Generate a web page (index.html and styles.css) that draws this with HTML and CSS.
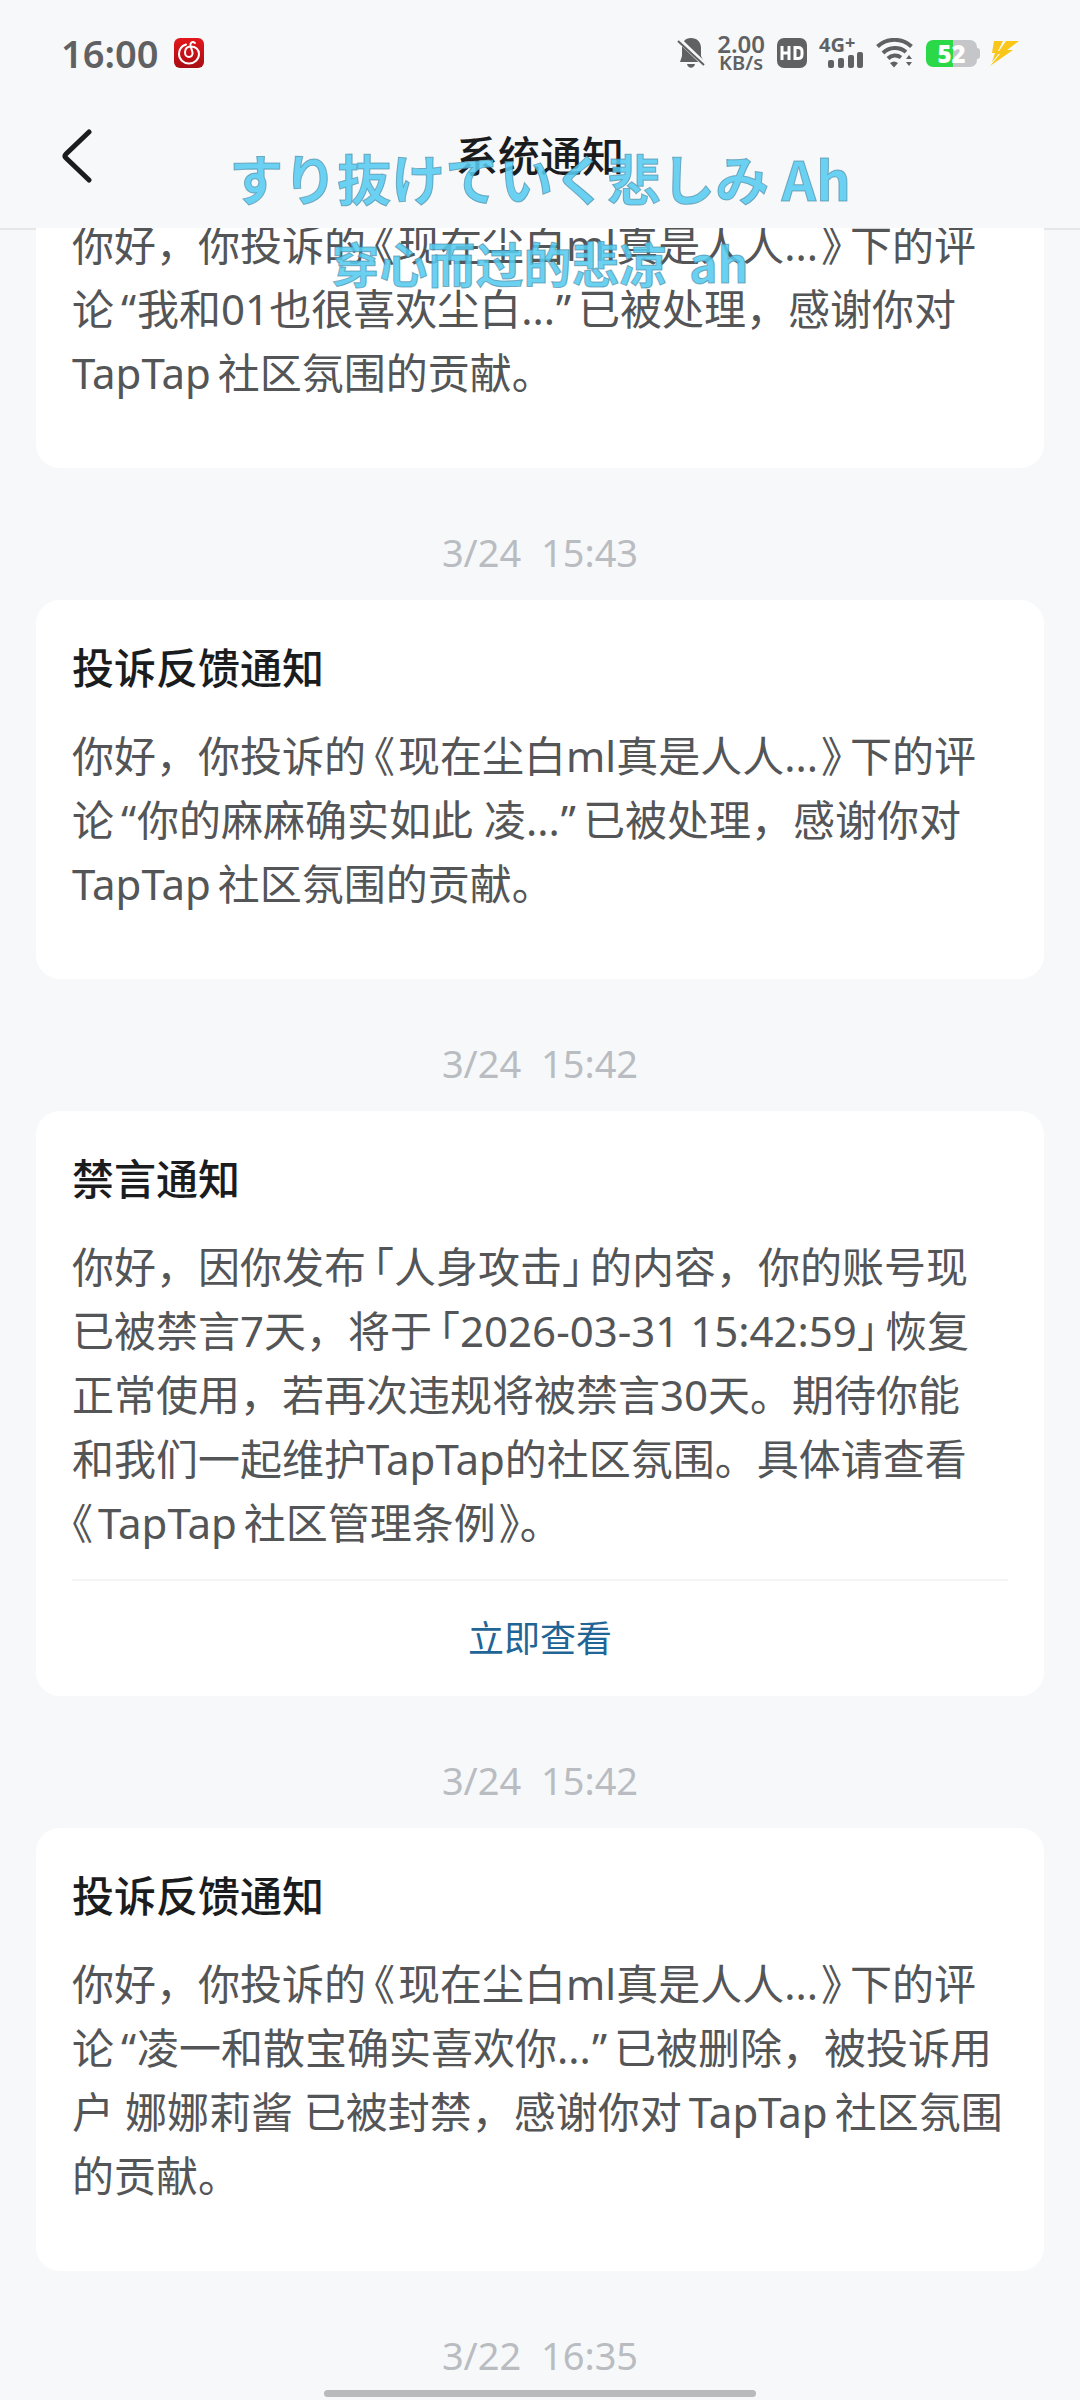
FILE: index.html
```html
<!doctype html>
<html lang="zh-CN">
<head>
	<meta charset="UTF-8" />
	<meta name="viewport" content="width=device-width, initial-scale=1" />
	<title>系统通知</title>
	<link rel="stylesheet" href="styles.css">
</head>
<body>
	<!--状态栏-->
	<div class="status">
		<span class="time">16:00</span>
		<svg class="music" width="30" height="30" viewBox="0 0 30 30">
			<defs>
				<linearGradient id="red" x1="0" y1="0" x2="0" y2="1">
					<stop offset="0" stop-color="#e3181d"/>
					<stop offset="1" stop-color="#a80d14"/>
				</linearGradient>
			</defs>
			<rect width="30" height="30" rx="6" fill="url(#red)"/>
			<path d="M12 6.500C7.500 8 5 11.500 5 16a10 9.500 0 0 0 20 0c0-4.500-3.500-7.500-8-7.500-4 0-6 2.500-6 6 0 3 2 4.500 4 4.500 2.500 0 4-2 3.500-4.500L16.500 7.500C16 4.500 18.500 3 21 5" fill="none" stroke="#fff" stroke-width="2" stroke-linecap="round"/>
		</svg>
		<div class="icons">
			<svg width="28" height="30" viewBox="0 0 28 30">
				<path d="M14 0c6 0 10 4 10 10v8l3 6H3l2-6v-8c0-6 3-10 9-10zM10 26h8c-1 5-7 5-8 0z" fill="#606163"/>
				<path d="M0 0L27 26" stroke="#f7f8fa" stroke-width="5"/>
				<path d="M1 3L27 27" stroke="#606163" stroke-width="2"/>
			</svg>
			<div class="speed"><b>2.00</b><span>KB/s</span></div>
			<svg width="30" height="30" viewBox="0 0 30 30">
				<rect width="30" height="30" rx="7" fill="#606163"/>
				<path d="M5 8v14M12 8v14M5 15h7M18 9.500h3q4 0 4 4v3q0 4-4 4h-3z" fill="none" stroke="#fff" stroke-width="3"/>
			</svg>
			<div class="signal">
				<span>4G<sup>+</sup></span>
				<svg width="36" height="16" viewBox="0 0 36 16" fill="#606163">
					<rect x="0" y="8" width="6" height="8" rx="2"/>
					<rect x="10" y="6" width="6" height="10" rx="2"/>
					<rect x="20" y="3" width="6" height="13" rx="2"/>
					<rect x="29" y="0" width="6" height="16" rx="2"/>
				</svg>
			</div>
			<svg width="38" height="30" viewBox="0 0 38 30">
				<path d="M1.500 8.500a25 25 0 0 1 34 0M7 15a17 17 0 0 1 23-1M12 20.500a10 10 0 0 1 13-1" fill="none" stroke="#606163" stroke-width="4"/>
				<path d="M14 25q4-3 8 0l-4 4.500zM30 21l3-4 3 4zM30 24h6l-3 4z" fill="#606163"/>
			</svg>
			<div class="battery"><span>52</span></div>
			<svg width="30" height="25" viewBox="0 0 30 25" fill="#fbc61a">
				<path d="M5 0h9l-5 10h3L3 21l3-9H3zM17 0h13L18 9h6L1 25l10-12H8z"/>
			</svg>
		</div>
	</div>

	<!--标题栏-->
	<header class="nav">
		<button class="back" aria-label="返回">
			<svg width="32" height="56" viewBox="0 0 32 56">
				<path d="M28 4L5 26q-2 2 0 4l23 22" fill="none" stroke="#1b1c1e" stroke-width="5" stroke-linecap="round"/>
			</svg>
		</button>
		<h1>系统通知</h1>
	</header>

	<!--通知列表-->
	<main class="feed">
		<section class="card cut">
			<p>你好，你投诉的<i class="mark open">《</i>现在尘白ml真是人人...<i class="mark close">》</i>下的评<br>论<i class="quote open">“</i>我和01也很喜欢尘白...<i class="quote close">”</i>已被处理，感谢你对<br>TapTap&#8198;社区氛围的贡献。</p>
		</section>

		<time class="date">3/24  15:43</time>
		<section class="card">
			<h2>投诉反馈通知</h2>
			<p>你好，你投诉的<i class="mark open">《</i>现在尘白ml真是人人...<i class="mark close">》</i>下的评<br>论<i class="quote open">“</i>你的麻麻确实如此 凌...<i class="quote close">”</i>已被处理，感谢你对<br>TapTap&#8198;社区氛围的贡献。</p>
		</section>

		<time class="date">3/24  15:42</time>
		<section class="card has-link">
			<h2>禁言通知</h2>
			<p>你好，因你发布<i class="corner open">「</i>人身攻击<i class="corner close">」</i>的内容，你的账号现<br>已被禁言7天，将于<i class="corner open">「</i>2026-03-31 15:42:59<i class="corner close">」</i>恢复<br>正常使用，若再次违规将被禁言30天。期待你能<br>和我们一起维护TapTap的社区氛围。具体请查看<br><i class="mark first">《</i>TapTap&#8198;社区管理条例<i class="mark last">》</i>。</p>
			<a class="more" href="#">立即查看</a>
		</section>

		<time class="date">3/24  15:42</time>
		<section class="card">
			<h2>投诉反馈通知</h2>
			<p>你好，你投诉的<i class="mark open">《</i>现在尘白ml真是人人...<i class="mark close">》</i>下的评<br>论<i class="quote open">“</i>凌一和散宝确实喜欢你...<i class="quote close">”</i>已被删除，被投诉用<br>户 娜娜莉酱 已被封禁，感谢你对&#8198;TapTap&#8198;社区氛围<br>的贡献。</p>
		</section>

		<time class="date">3/22  16:35</time>
	</main>

	<!--桌面歌词-->
	<div class="lyrics">
		<p lang="ja">すり抜けていく悲しみ Ah</p>
		<p class="sub">穿心而过的悲凉  ah</p>
	</div>
	<div class="home"></div>
</body>
</html>
```
FILE: styles.css
```css
* {
    padding: 0;
    margin: 0;
    box-sizing: border-box;
}

body {
    position: relative;
    display: flex;
    flex-direction: column;
    height: 100vh;
    overflow: hidden;
    background: #f7f8fa;
    color: #545557;
    font-family: "Noto Sans", "Noto Sans CJK SC", sans-serif;
    font-size: 42px;
    line-height: 64px;
}

/* 状态栏 */
.status {
    flex: none;
    display: flex;
    align-items: center;
    height: 84px;
    padding: 22px 61px 0;
    color: #606163;
}

.time {
    font-size: 38px;
    font-weight: 600;
}

.music {
    margin-left: 16px;
}

.icons {
    display: flex;
    align-items: center;
    gap: 12px;
    margin-left: auto;
}

.speed {
    font-size: 20px;
    font-weight: 600;
    line-height: 19px;
    text-align: center;
}

.speed b,
.speed span {
    display: block;
}

.speed b {
    font-size: 24px;
    font-weight: 600;
}

.signal {
    font-size: 20px;
    font-weight: 700;
    line-height: 14px;
}

.signal span,
.signal svg {
    display: block;
}

.signal svg {
    margin-left: 9px;
}

.signal sup {
    font-size: 18px;
    line-height: 0;
    vertical-align: 3px;
}

.battery {
    position: relative;
    width: 51px;
    height: 27px;
    border-radius: 7px;
    background: linear-gradient(90deg, #2bd848 52%, #c5c6c9 52%);
    color: #fff;
    font-family: "Open Sans", sans-serif;
    font-size: 24px;
    font-weight: 800;
    line-height: 27px;
    text-align: center;
}

.battery::after {
    content: "";
    position: absolute;
    right: -3px;
    top: 8px;
    width: 3px;
    height: 11px;
    border-radius: 0 3px 3px 0;
    background: #c5c6c9;
}

/* 标题栏 */
.nav {
    flex: none;
    display: grid;
    grid-template-columns: 120px 1fr 120px;
    align-items: center;
    height: 144px;
    color: #1b1c1e;
}

.back {
    display: flex;
    padding-left: 61px;
    border: 0;
    background: none;
    cursor: pointer;
}

.nav h1 {
    font-size: 42px;
    font-weight: 500;
    text-align: center;
}

/* 通知列表 */
.feed {
    flex: 1;
    overflow: hidden;
    padding: 0 36px;
    background: linear-gradient(#e6e7e9, #e6e7e9) 0 0 / 100% 2px no-repeat;
}

.card {
    padding: 36px 36px 63px;
    border-radius: 24px;
    background: #fff;
}

.card h2 {
    margin-bottom: 24px;
    color: #1b1c1e;
    font-size: 42px;
    font-weight: 500;
}

.card.cut {
    padding-top: 0;
    border-radius: 0 0 24px 24px;
}

.cut p {
    margin-top: -15px;
}

/* 标点 */
.mark,
.corner,
.quote {
    font-style: normal;
}

.mark,
.corner {
    font-feature-settings: "halt";
}

.mark.open {
    padding: 0 3px 0 8px;
}

.mark.close {
    padding: 0 8px 0 3px;
}

.mark.first {
    padding-right: 5px;
}

.mark.last {
    padding-left: 3px;
}

.corner.open,
.quote.open {
    padding-left: 7px;
}

.corner.close,
.quote.close {
    padding-right: 7px;
}

.quote.open {
    padding-right: 1px;
}

.quote.close {
    padding-left: 1px;
}

.card.has-link {
    padding-bottom: 0;
}

.more {
    display: block;
    margin-top: 24px;
    border-top: 2px solid #f3f4f5;
    color: #1f6596;
    font-size: 36px;
    line-height: 115px;
    text-align: center;
    text-decoration: none;
}

.date {
    display: block;
    padding: 54px 0 18px;
    color: #b9bcc1;
    font-size: 38px;
    line-height: 60px;
    text-align: center;
    white-space: pre;
}

/* 歌词浮层 */
.lyrics {
    position: absolute;
    top: 136px;
    left: 0;
    right: 0;
    color: rgba(86, 203, 240, .88);
    font-family: "Noto Sans CJK JP", sans-serif;
    font-size: 54px;
    font-weight: 700;
    line-height: 84px;
    text-align: center;
    pointer-events: none;
    -webkit-text-stroke: 1px rgba(70, 130, 155, .6);
}

.lyrics p {
    white-space: pre;
}

.lyrics .sub {
    font-family: "Noto Sans CJK SC", sans-serif;
    font-size: 48px;
}

.home {
    position: absolute;
    left: 30%;
    right: 30%;
    bottom: 3px;
    height: 7px;
    border-radius: 4px;
    background: #b9babc;
}
```
